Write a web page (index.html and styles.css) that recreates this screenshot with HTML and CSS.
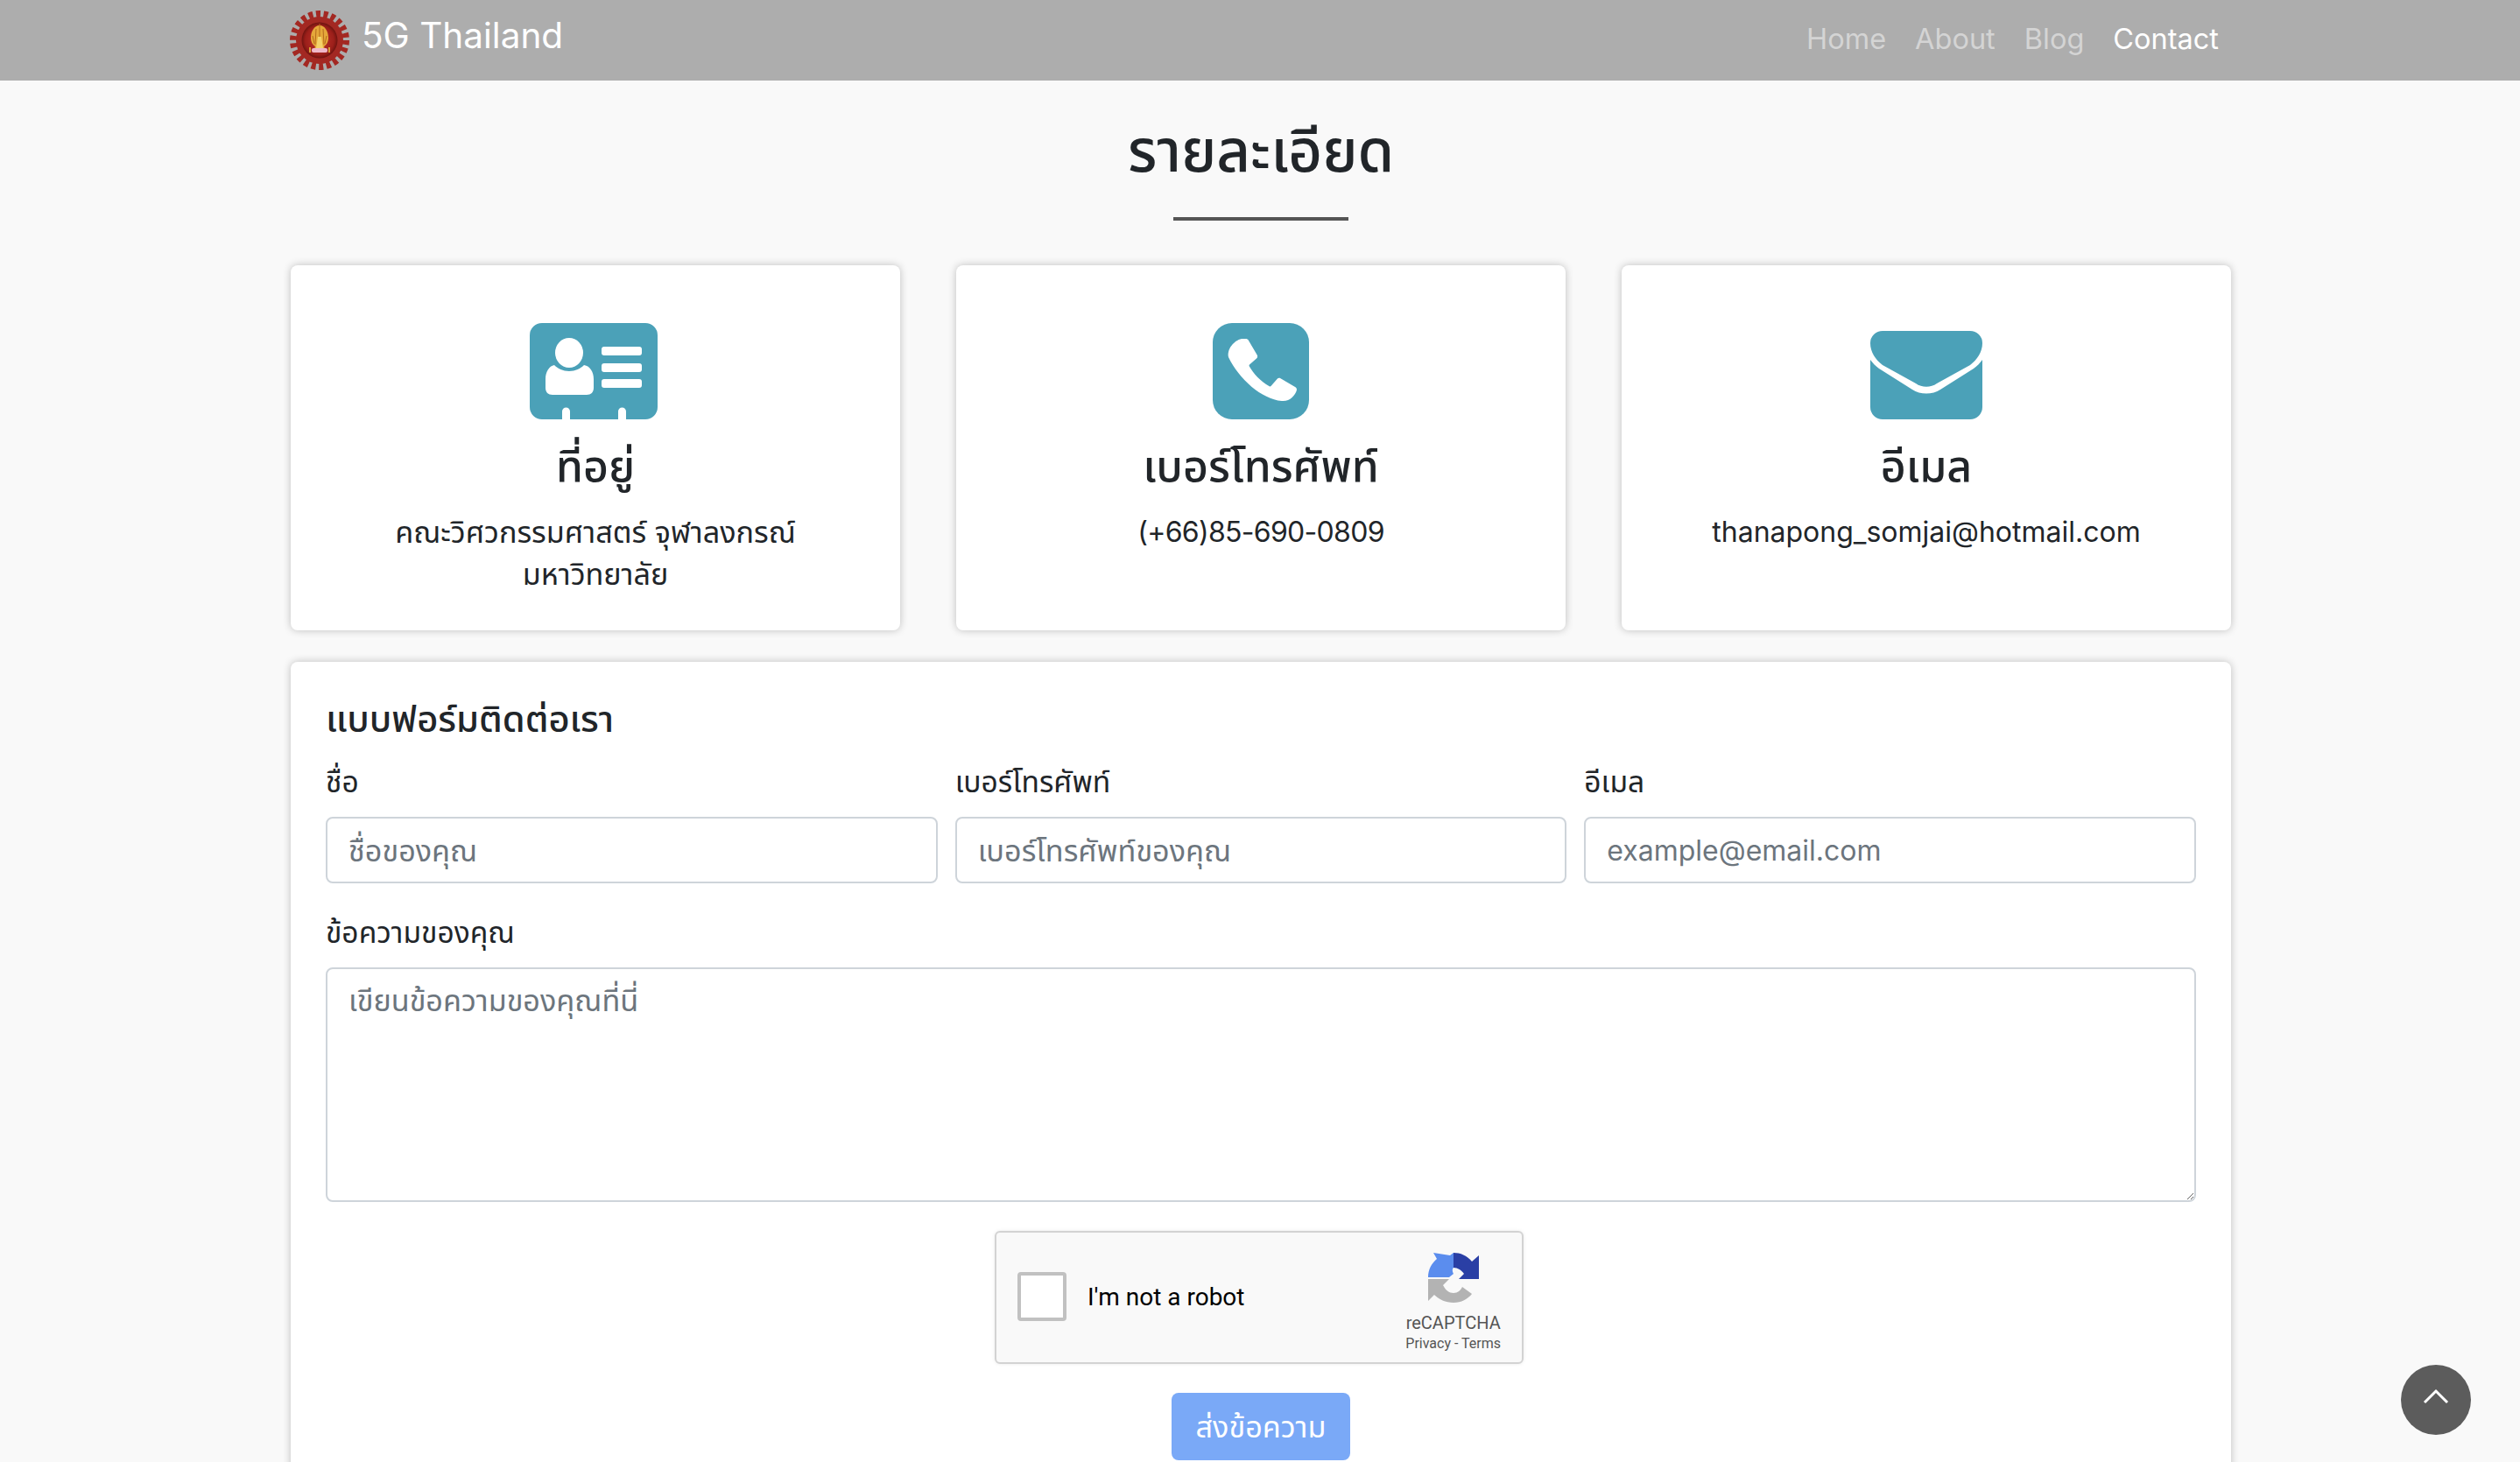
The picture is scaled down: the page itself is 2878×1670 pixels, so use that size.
FILE: index.html
```html
<!DOCTYPE html>
<html lang="th">
<head>
  <meta charset="utf-8">
  <title>5G Thailand - Contact</title>
  <meta name="viewport" content="width=device-width, initial-scale=1.0">
  <link rel="stylesheet" href="styles.css">
</head>
<body>
  <nav class="navbar">
    <div class="nav-inner">
      <a class="brand" href="#">
        <svg class="brand-logo" viewBox="0 0 68 68">
          <defs>
            <radialGradient id="logoCore">
              <stop offset="0" stop-color="#c2352c"/>
              <stop offset="0.8" stop-color="#9c1f1a"/>
              <stop offset="1" stop-color="#6e1410"/>
            </radialGradient>
          </defs>
          <circle cx="34" cy="34" r="27" fill="#a32822"/>
          <circle cx="34" cy="34" r="30" fill="none" stroke="#a32822" stroke-width="8" stroke-dasharray="5 3.57"/>
          <circle cx="34" cy="34" r="20.500" fill="url(#logoCore)"/>
          <path d="M34 17c6 0 10 7 10 14 0 5-2 8-5 10l1 3H28l1-3c-3-2-5-5-5-10 0-7 4-14 10-14z" fill="#e5a83a"/>
          <path d="M34 15v28M30 21l-1 18M38 21l1 18M26 29l2 9M42 29l-2 9" stroke="#b56a1c" stroke-width="1"/>
          <path d="M32 30h4l2 13h-8z" fill="#f3d36a"/>
          <rect x="25" y="43" width="18" height="5" rx="2" fill="#eeb7c8"/>
          <path d="M23 42v6M45 42v6" stroke="#d9a13a" stroke-width="2"/>
        </svg>
        <span>5G Thailand</span>
      </a>
      <ul class="nav-links">
        <li><a href="#">Home</a></li>
        <li><a href="#">About</a></li>
        <li><a href="#">Blog</a></li>
        <li><a class="active" href="#">Contact</a></li>
      </ul>
    </div>
  </nav>

  <main class="container">
    <h1 class="page-title">รายละเอียด</h1>
    <div class="title-line"></div>

    <section class="info-row">
      <div class="info-card">
        <svg class="info-icon" width="146" height="110" viewBox="0 0 146 110">
          <path fill="#4ba1b8" d="M14 0h118a14 14 0 0 1 14 14v82a14 14 0 0 1-14 14h-22V101a4.500 4.500 0 0 0-9 0v9H46V101a4.500 4.500 0 0 0-9 0v9H14A14 14 0 0 1 0 96V14A14 14 0 0 1 14 0z"/>
          <ellipse cx="45" cy="34" rx="16" ry="17" fill="#fff"/>
          <path fill="#fff" d="M28 48c4 4 10 7 17 7s13-3 17-7c7 1 11 8 11 16v10c0 5-3 8-8 8H26c-5 0-8-3-8-8V64c0-8 4-15 10-16z"/>
          <rect x="82" y="27" width="46" height="10" rx="3" fill="#fff"/>
          <rect x="82" y="46" width="46" height="10" rx="3" fill="#fff"/>
          <rect x="82" y="64" width="46" height="10" rx="3" fill="#fff"/>
        </svg>
        <h3>ที่อยู่</h3>
        <p class="thai-text">คณะวิศวกรรมศาสตร์ จุฬาลงกรณ์<br>มหาวิทยาลัย</p>
      </div>
      <div class="info-card">
        <svg class="info-icon" width="110" height="110" viewBox="0 0 110 110">
          <rect width="110" height="110" rx="22" fill="#4ba1b8"/>
          <path fill="#fff" d="M33 18l5 0c1 0 2 .5 2.700 1.500l10 17c.8 1.300.5 3-.7 4l-8 7c-.5.5-.6 1-.3 1.700 5 9 13 17 23 23 .7.4 1.300.3 1.800-.2l7-8c1-1.200 2.700-1.500 4-.7l17 10c1.300.8 1.800 2.300 1.300 3.700-1.500 5.500-8 13-17 12C56 87 30 64 18 39c-2-9 6-19 15-21z"/>
        </svg>
        <h3>เบอร์โทรศัพท์</h3>
        <p class="phone-text">(+66)85-690-0809</p>
      </div>
      <div class="info-card">
        <svg class="info-icon" width="128" height="101" viewBox="0 0 128 101">
          <path fill="#4ba1b8" d="M14 0h100a14 14 0 0 1 14 14c0 10-6 19-14 25L76 60c-7 5-17 5-24 0L14 39C6 33 0 24 0 14A14 14 0 0 1 14 0z"/>
          <path fill="#4ba1b8" d="M0 33c3 4 6 7 10 10l38 24c9 6 23 6 32 0l38-24c4-3 7-6 10-10v54a14 14 0 0 1-14 14H14A14 14 0 0 1 0 87z"/>
        </svg>
        <h3>อีเมล</h3>
        <p>thanapong_somjai@hotmail.com</p>
      </div>
    </section>

    <form class="contact-card">
      <h4>แบบฟอร์มติดต่อเรา</h4>
      <div class="field-row">
        <div>
          <label for="name">ชื่อ</label>
          <input id="name" class="thai-input" type="text" placeholder="ชื่อของคุณ">
        </div>
        <div>
          <label for="phone">เบอร์โทรศัพท์</label>
          <input id="phone" class="thai-input" type="text" placeholder="เบอร์โทรศัพท์ของคุณ">
        </div>
        <div>
          <label for="email">อีเมล</label>
          <input id="email" type="email" placeholder="example@email.com">
        </div>
      </div>
      <div class="field-message">
        <label for="message">ข้อความของคุณ</label>
        <textarea id="message" class="thai-input" placeholder="เขียนข้อความของคุณที่นี่"></textarea>
      </div>

      <div class="captcha">
        <span class="captcha-box"></span>
        <span class="captcha-text">I'm not a robot</span>
        <div class="captcha-brand">
          <svg width="62" height="62" viewBox="0 0 62 62">
            <path fill="#b3b3b3" d="M2 33H26L19 40C22 46 26 49 31 49C36 49 39 46 41 42L52 50C47 56 40 60 31 60C22 60 14 56 9 51L2 58z"/>
            <path fill="#5b8dee" d="M2 31C2 22 6 15 12 10L8 3L27 6L31 3V20C29 22 30 25 31 27L26 31H2z"/>
            <path fill="#2a3fa5" d="M31 3C39 3 46 6 52 13L60 6V33H37L43 27C40 23 36 20 31 20z"/>
          </svg>
          <span class="captcha-name">reCAPTCHA</span>
          <span class="captcha-links">Privacy - Terms</span>
        </div>
      </div>

      <button type="button" class="send-btn">ส่งข้อความ</button>
    </form>
  </main>

  <a class="back-top" href="#">
    <svg width="30" height="20" viewBox="0 0 30 20">
      <path d="M2 17L15 4l13 13" fill="none" stroke="#fff" stroke-width="3"/>
    </svg>
  </a>
</body>
</html>
```

FILE: styles.css
```css
* {
  box-sizing: border-box;
}

html, body {
  height: 100%;
  margin: 0;
  overflow: hidden;
}

body {
  background-color: #f9f9f9;
  color: #212529;
  font-family: "Inter", "Noto Sans", "Noto Sans Thai", sans-serif;
  font-size: 32px;
  line-height: 48px;
}

a {
  text-decoration: none;
}

.navbar {
  height: 92px;
  background-color: #adadad;
}

.nav-inner {
  margin: 0 330px 0 331px;
  height: 100%;
  display: flex;
  justify-content: space-between;
  align-items: center;
}

.brand {
  display: flex;
  align-items: center;
  gap: 14px;
  color: #fff;
  font-size: 40.5px;
  height: 92px;
  padding-bottom: 5px;
}

.brand span {
  padding-bottom: 6px;
}

.brand-logo {
  width: 68px;
  height: 68px;
  margin-top: 5px;
}

.nav-links {
  display: flex;
  gap: 33px;
  list-style: none;
  margin: 0;
  padding: 0 14px 2px 0;
  font-size: 32.5px;
}

.nav-links a {
  color: #d4d4d4;
}

.nav-links a.active {
  color: #fff;
}

.container {
  margin: 0 330px 0 332px;
}

.page-title {
  margin: 0;
  padding-top: 40px;
  height: 132px;
  font-size: 67px;
  line-height: 80px;
  font-weight: 500;
  text-align: center;
}

.title-line {
  width: 200px;
  height: 4px;
  margin: 24px auto 0;
  background-color: #555;
}

.info-row {
  display: grid;
  grid-template-columns: repeat(3, 1fr);
  gap: 64px;
  margin-top: 51px;
}

.info-card {
  height: 417px;
  padding-top: 66px;
  background-color: #fff;
  border-radius: 8px;
  box-shadow: 0 0 10px rgba(0, 0, 0, 0.24);
  text-align: center;
}

.info-icon {
  display: block;
  margin: auto auto 0;
}

.info-card:nth-child(1) .info-icon {
  margin-left: calc(50% - 75px);
}

.info-card:nth-child(3) .info-icon {
  margin-top: 9px;
}

.info-card h3 {
  margin: 24px 0 23px;
  font-size: 50px;
  line-height: 58px;
  font-weight: 500;
}

.info-card p {
  margin: 0;
}

.info-card .thai-text {
  font-size: 34.2px;
}

.info-card .phone-text {
  letter-spacing: -0.7px;
}

.contact-card {
  margin-top: 36px;
  height: 1100px;
  padding: 40px 40px;
  background-color: #fff;
  border-radius: 8px;
  box-shadow: 0 0 10px rgba(0, 0, 0, 0.24);
}

.contact-card h4 {
  margin: 0;
  font-size: 41.7px;
  line-height: 50px;
  font-weight: 500;
}

.field-row {
  display: grid;
  grid-template-columns: repeat(3, 1fr);
  gap: 20px;
  margin-top: 23px;
}

label {
  display: block;
  margin-bottom: 16px;
  font-size: 33.6px;
}

input, textarea {
  display: block;
  width: 100%;
  padding: 12px 24px;
  font: inherit;
  color: #212529;
  background-color: #fff;
  border: 2px solid #ced4da;
  border-radius: 8px;
  outline: none;
}

input {
  height: 76px;
}

textarea {
  height: 268px;
}

.thai-input {
  font-size: 34.2px;
}

input::placeholder, textarea::placeholder {
  color: #6c757d;
}

.field-message {
  margin-top: 32px;
}

.captcha {
  display: flex;
  align-items: center;
  width: 604px;
  height: 152px;
  margin: 33px auto 0 calc(50% - 304px);
  padding: 0 24px;
  background-color: #f9f9f9;
  border: 2px solid #d3d3d3;
  border-radius: 6px;
  box-shadow: 0 0 4px rgba(0, 0, 0, 0.08);
  font-family: "Roboto", sans-serif;
  color: #000;
}

.captcha-box {
  width: 56px;
  height: 56px;
  margin-top: -2px;
  background-color: #fff;
  border: 4px solid #c1c1c1;
  border-radius: 4px;
}

.captcha-text {
  margin-left: 24px;
  font-size: 28px;
}

.captcha-brand {
  display: flex;
  flex-direction: column;
  align-items: center;
  margin-left: auto;
  margin-top: 10px;
  color: #555;
}

.captcha-name {
  font-size: 20px;
  line-height: 26px;
  margin-top: 8px;
}

.captcha-links {
  font-size: 16px;
  line-height: 22px;
}

.send-btn {
  display: block;
  width: 204px;
  height: 77px;
  margin: 33px auto 0;
  font: inherit;
  font-size: 34.2px;
  color: #fff;
  background-color: #7aa9f7;
  border: none;
  border-radius: 8px;
}

.back-top {
  position: fixed;
  right: 56px;
  bottom: 31px;
  width: 80px;
  height: 80px;
  display: flex;
  align-items: center;
  justify-content: center;
  padding-bottom: 8px;
  background-color: #5c5c5c;
  border-radius: 50%;
}
```
